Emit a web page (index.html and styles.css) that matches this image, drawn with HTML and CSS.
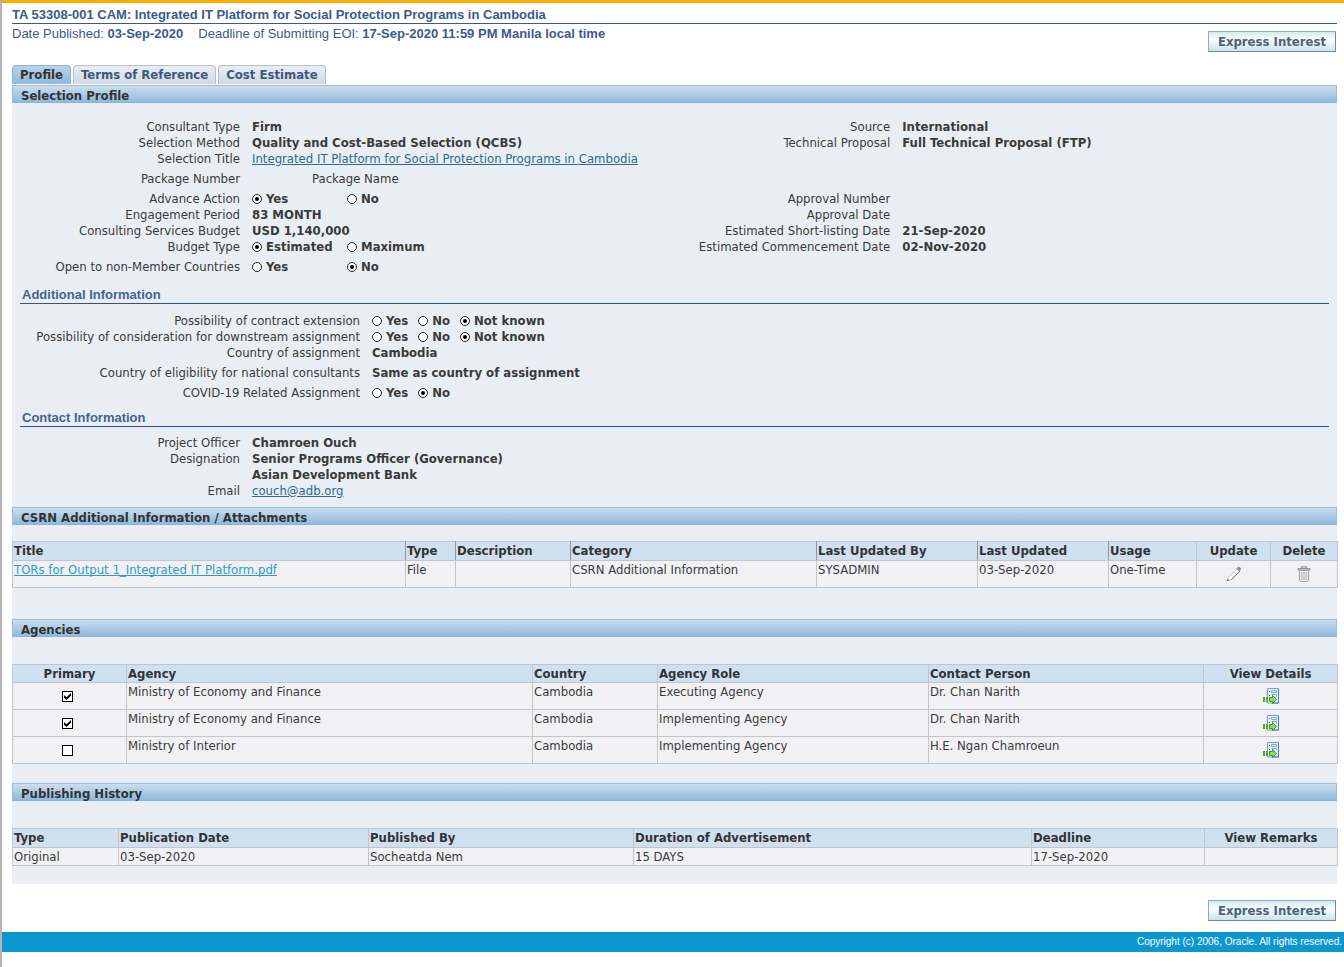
FILE: index.html
```
<!DOCTYPE html>
<html lang="en">
<head>
<meta charset="utf-8">
<title>TA 53308-001 CAM</title>
<link rel="stylesheet" href="styles.css">
</head>
<body>
<svg class="defs" aria-hidden="true">
  <symbol id="pencil" viewBox="0 0 18 16">
    <path d="M2.2 14.6 3.4 11.4 12.2 2.6 15 5.2 6 13.6Z" fill="#fcfcfc" stroke="#b4b4b4" stroke-width=".8"/>
    <path d="M11.4 2.6 13 1.1Q14 .4 15.2 1.4 16.6 2.6 15.8 3.8L14.4 5.4Z" fill="#8e8e8e"/>
    <path d="M6.2 13.8 15 5.2" stroke="#777" fill="none"/>
    <path d="M1.6 15.2 2.6 12.9 4.4 14.5Z" fill="#666"/>
  </symbol>
  <symbol id="trash" viewBox="0 0 14 16">
    <path d="M4.5 2V.8h5V2M1 2.5h12v1.5H1z" fill="#ddd" stroke="#959595"/>
    <path d="M2.5 4.5h9v9.4q0 1.4-1.4 1.4H3.9q-1.4 0-1.4-1.4z" fill="#f8f8f8" stroke="#a4a4a4"/>
    <path d="M4.5 6v8M6.2 6v8M7.8 6v8M9.5 6v8" stroke="#aaa" fill="none" stroke-width=".8"/>
  </symbol>
  <symbol id="details" viewBox="0 0 16 16">
    <path d="M4.5.5h11v14.5h-11z" fill="#eaf3ff" stroke="#6d9fe6"/>
    <path d="M15.5 1v14h-6" stroke="#4a7bcc" fill="none"/>
    <path d="M8.5 2.5h5v2h-5zM8.5 6.5h5v2" fill="#fff" stroke="#78a8ec"/>
    <path d="M6 3h1v1H6zM6 7h1v1H6z" fill="#2d62b5"/>
    <path d="M0 9h2v5H0zM3 9h2v5H3z" fill="#4fae24"/>
    <path d="M6.5 9.5h3V7.4l4.2 4.1-4.2 4.1v-2.1h-3z" fill="#8fe04b" stroke="#3c9420"/>
  </symbol>
</svg>
<header class="top">
  <h1 class="title">TA 53308-001 CAM: Integrated IT Platform for Social Protection Programs in Cambodia</h1>
  <div class="dates"><span>Date Published: <b>03-Sep-2020</b></span><span>Deadline of Submitting EOI: <b>17-Sep-2020 11:59 PM Manila local time</b></span></div>
  <div class="actions"><button class="btn" type="button">Express Interest</button></div>
  <nav class="tabs">
    <a class="tab active" href="#profile">Profile</a>
    <a class="tab" href="#terms">Terms of Reference</a>
    <a class="tab" href="#cost">Cost Estimate</a>
  </nav>
</header>
<main class="panel" id="profile">
  <h2 class="bar">Selection Profile</h2>
  <div class="pair">
    <dl class="fields">
      <dt>Consultant Type</dt><dd>Firm</dd>
      <dt>Selection Method</dt><dd>Quality and Cost-Based Selection (QCBS)</dd>
      <dt>Selection Title</dt><dd><a class="link" href="#title">Integrated IT Platform for Social Protection Programs in Cambodia</a></dd>
      <dt class="tall">Package Number</dt><dd class="tall package">Package Name</dd>
      <dt>Advance Action</dt><dd class="choices"><label><input type="radio" name="advance" checked>Yes</label><label><input type="radio" name="advance">No</label></dd>
      <dt>Engagement Period</dt><dd>83 MONTH</dd>
      <dt>Consulting Services Budget</dt><dd>USD 1,140,000</dd>
      <dt>Budget Type</dt><dd class="choices"><label><input type="radio" name="budget" checked>Estimated</label><label><input type="radio" name="budget">Maximum</label></dd>
      <dt class="tall">Open to non-Member Countries</dt><dd class="tall choices"><label><input type="radio" name="open">Yes</label><label><input type="radio" name="open" checked>No</label></dd>
    </dl>
    <dl class="fields second">
      <dt>Source</dt><dd>International</dd>
      <dt>Technical Proposal</dt><dd>Full Technical Proposal (FTP)</dd>
      <dt class="approval">Approval Number</dt><dd></dd>
      <dt>Approval Date</dt><dd></dd>
      <dt>Estimated Short-listing Date</dt><dd>21-Sep-2020</dd>
      <dt>Estimated Commencement Date</dt><dd>02-Nov-2020</dd>
    </dl>
  </div>
  <h3 class="sub">Additional Information</h3>
  <dl class="fields wide">
    <dt>Possibility of contract extension</dt><dd class="inline"><label><input type="radio" name="ext">Yes</label><label><input type="radio" name="ext">No</label><label><input type="radio" name="ext" checked>Not known</label></dd>
    <dt>Possibility of consideration for downstream assignment</dt><dd class="inline"><label><input type="radio" name="down">Yes</label><label><input type="radio" name="down">No</label><label><input type="radio" name="down" checked>Not known</label></dd>
    <dt>Country of assignment</dt><dd>Cambodia</dd>
    <dt class="tall">Country of eligibility for national consultants</dt><dd class="tall">Same as country of assignment</dd>
    <dt>COVID-19 Related Assignment</dt><dd class="inline"><label><input type="radio" name="covid">Yes</label><label><input type="radio" name="covid" checked>No</label></dd>
  </dl>
  <h3 class="sub">Contact Information</h3>
  <dl class="fields contact">
    <dt>Project Officer</dt><dd>Chamroen Ouch</dd>
    <dt>Designation</dt><dd>Senior Programs Officer (Governance)<br>Asian Development Bank</dd>
    <dt>Email</dt><dd><a class="link" href="mailto:couch@adb.org">couch@adb.org</a></dd>
  </dl>
  <h2 class="bar">CSRN Additional Information / Attachments</h2>
  <table class="grid files">
    <colgroup><col class="w393"><col class="w50"><col class="w115"><col class="w246"><col class="w161"><col class="w131"><col class="w88"><col class="w74"><col class="w67"></colgroup>
    <thead><tr><th>Title</th><th>Type</th><th>Description</th><th>Category</th><th>Last Updated By</th><th>Last Updated</th><th>Usage</th><th class="mid">Update</th><th class="mid">Delete</th></tr></thead>
    <tbody><tr><td><a class="file" href="#tor">TORs for Output 1_Integrated IT Platform.pdf</a></td><td>File</td><td></td><td>CSRN Additional Information</td><td>SYSADMIN</td><td>03-Sep-2020</td><td>One-Time</td>
    <td class="mid"><button class="icon" type="button" aria-label="Update"><svg width="18" height="16"><use href="#pencil"/></svg></button></td>
    <td class="mid"><button class="icon" type="button" aria-label="Delete"><svg width="14" height="16"><use href="#trash"/></svg></button></td></tr></tbody>
  </table>
  <h2 class="bar">Agencies</h2>
  <table class="grid agencies">
    <colgroup><col class="w114"><col class="w406"><col class="w125"><col class="w271"><col class="w275"><col class="w134"></colgroup>
    <thead><tr><th class="mid">Primary</th><th>Agency</th><th>Country</th><th>Agency Role</th><th>Contact Person</th><th class="mid">View Details</th></tr></thead>
    <tbody>
    <tr><td class="check"><input type="checkbox" aria-label="Primary" checked></td><td>Ministry of Economy and Finance</td><td>Cambodia</td><td>Executing Agency</td><td>Dr. Chan Narith</td><td class="mid"><button class="icon" type="button" aria-label="View Details"><svg width="16" height="16"><use href="#details"/></svg></button></td></tr>
    <tr><td class="check"><input type="checkbox" aria-label="Primary" checked></td><td>Ministry of Economy and Finance</td><td>Cambodia</td><td>Implementing Agency</td><td>Dr. Chan Narith</td><td class="mid"><button class="icon" type="button" aria-label="View Details"><svg width="16" height="16"><use href="#details"/></svg></button></td></tr>
    <tr><td class="check"><input type="checkbox" aria-label="Primary"></td><td>Ministry of Interior</td><td>Cambodia</td><td>Implementing Agency</td><td>H.E. Ngan Chamroeun</td><td class="mid"><button class="icon" type="button" aria-label="View Details"><svg width="16" height="16"><use href="#details"/></svg></button></td></tr>
    </tbody>
  </table>
  <h2 class="bar">Publishing History</h2>
  <table class="grid history">
    <colgroup><col class="w106"><col class="w250"><col class="w265"><col class="w398"><col class="w173"><col class="w133"></colgroup>
    <thead><tr><th>Type</th><th>Publication Date</th><th>Published By</th><th>Duration of Advertisement</th><th>Deadline</th><th class="mid">View Remarks</th></tr></thead>
    <tbody><tr><td>Original</td><td>03-Sep-2020</td><td>Socheatda Nem</td><td>15 DAYS</td><td>17-Sep-2020</td><td></td></tr></tbody>
  </table>
</main>
<div class="actions bottom"><button class="btn" type="button">Express Interest</button></div>
<footer class="foot">Copyright (c) 2006, Oracle. All rights reserved.</footer>
</body>
</html>
```
FILE: styles.css
```
* { box-sizing: border-box; }
html { border-left: 2px solid #b4b4b4; min-height: 100%; background: #fff; }
body {
  margin: 0;
  border-top: 3px solid #ffab00;
  font: 13px/16px "DejaVu Sans Condensed", "Noto Sans", sans-serif;
  color: #3a3a3a;
}
h1, h2, h3, dl, dd { margin: 0; }
.defs { display: none; }
.top { padding: 4px 7px 0 10px; font-family: "Liberation Sans", Arial, sans-serif; color: #3a5a8e; }
.title { font-size: 13px; line-height: 16px; border-bottom: 1px solid #3a5a8e; }
.dates { display: flex; gap: 15px; font-size: 13px; line-height: 16px; padding-top: 2px; height: 7px; white-space: nowrap; }
.actions { display: flex; justify-content: flex-end; padding-right: 1px; }
.btn {
  font: bold 13px/16px "DejaVu Sans Condensed", "Noto Sans", sans-serif;
  color: #4f6179;
  padding: 2px 9px 1px;
  border: 1px solid;
  border-color: #8fa9bd #738a9e #738a9e #8fa9bd;
  background: linear-gradient(#d3eaf0, #fafdfd 40%, #c8e3ea);
}
.tabs { display: flex; gap: 2px; margin-top: 13px; }
.tab {
  font: bold 13px/16px "DejaVu Sans Condensed", "Noto Sans", sans-serif;
  color: #41587b;
  padding: 1px 7px;
  text-decoration: none;
  border: 1px solid #b9bfc7;
  border-bottom: 0;
  border-radius: 4px 4px 0 0;
  background: linear-gradient(#e8eef5, #cfdae6);
}
.tab.active { color: #333; border-color: #8fb6d6; background: linear-gradient(#b9d3e9, #8fb9dc); }
.panel { margin: 1px 7px 0 10px; background: #e9eef5; padding-bottom: 18px; }
.bar {
  font-size: 13px;
  line-height: 16px;
  padding: 2px 8px 0;
  height: 18px;
  color: #333;
  border: 1px solid #9dbbd9;
  border-bottom-color: #8cb4d8;
  background: linear-gradient(#cbdeee, #8fb9dd);
}
.pair { display: grid; grid-template-columns: 49% 51%; padding-top: 16px; }
.fields { display: grid; grid-template-columns: 228px 1fr; column-gap: 12px; grid-auto-rows: min-content; }
.fields.second { grid-template-columns: 229px 1fr; }
.fields dt { text-align: right; }
.fields dd { font-weight: bold; }
.fields .tall { padding: 4px 0; }
.fields .package { font-weight: normal; padding-left: 60px; }
.fields .approval { padding-top: 40px; }
.fields.wide { grid-template-columns: 348px 1fr; }
.wide { padding: 9px 0 1px; }
.contact { padding: 8px 0; }
.choices { display: grid; grid-template-columns: 95px 1fr; }
.inline { display: flex; gap: 10px; }
label { display: flex; align-items: center; gap: 4px; white-space: nowrap; }
input { appearance: none; width: 10px; height: 10px; margin: 0; background: #fff; border: 1px solid #222; flex: none; }
input[type=radio] { border-radius: 50%; display: grid; place-items: center; }
input[type=radio]:checked::before { content: ""; width: 4px; height: 4px; border-radius: 50%; background: #000; }
.link { color: #2b6c8b; font-weight: normal; }
.sub {
  margin: 8px 8px 0;
  padding: 0 2px;
  font: bold 13px/16px "Liberation Sans", Arial, sans-serif;
  color: #44648f;
  border-bottom: 1px solid #33528a;
}
.grid { width: calc(100% - 1px); table-layout: fixed; border-collapse: collapse; margin: 16px 0 31px; }
.agencies { margin: 27px 0 19px; }
.history { margin: 27px 0 0; }
.grid th, .grid td { border: 1px solid #c2c5cb; padding: 1px; text-align: left; vertical-align: top; white-space: nowrap; }
.grid th { background: #cfe0f1; color: #333; }
.files th:nth-child(-n+6) { border-right-color: #8d979f; }
.grid.agencies th, .grid.history td { padding-bottom: 0; }
.grid td { background: #f1f1f4; }
.files td, .agencies td { height: 27px; }
.grid .mid, .grid .check { text-align: center; }
.grid td.mid, .grid .check { vertical-align: middle; }
.grid .check { padding-right: 5px; }
.check input { display: inline-grid; place-items: center; width: 11px; height: 11px; border-color: #000; vertical-align: middle; }
.check input:checked::before { content: ""; width: 7px; height: 7px; background: #000; clip-path: polygon(0 30%, 35% 62%, 100% 0, 100% 38%, 35% 100%, 0 68%); }
.icon { display: inline-flex; border: 0; padding: 0; background: none; vertical-align: middle; }
.file { color: #2f9acb; text-decoration-skip-ink: none; }
.w393 { width: 393px; } .w50 { width: 50px; } .w115 { width: 115px; } .w246 { width: 246px; }
.w161 { width: 161px; } .w131 { width: 131px; } .w88 { width: 88px; } .w74 { width: 74px; } .w67 { width: 67px; }
.w114 { width: 114px; } .w406 { width: 406px; } .w125 { width: 125px; } .w271 { width: 271px; } .w275 { width: 275px; } .w134 { width: 134px; }
.w106 { width: 106px; } .w250 { width: 250px; } .w265 { width: 265px; } .w398 { width: 398px; } .w173 { width: 173px; } .w133 { width: 133px; }
.bottom { padding: 16px 8px 11px; }
.foot { background: #0d97d1; color: #fff; font: 10px/20px "Liberation Sans", Arial, sans-serif; text-align: right; padding-right: 2px; }
```
